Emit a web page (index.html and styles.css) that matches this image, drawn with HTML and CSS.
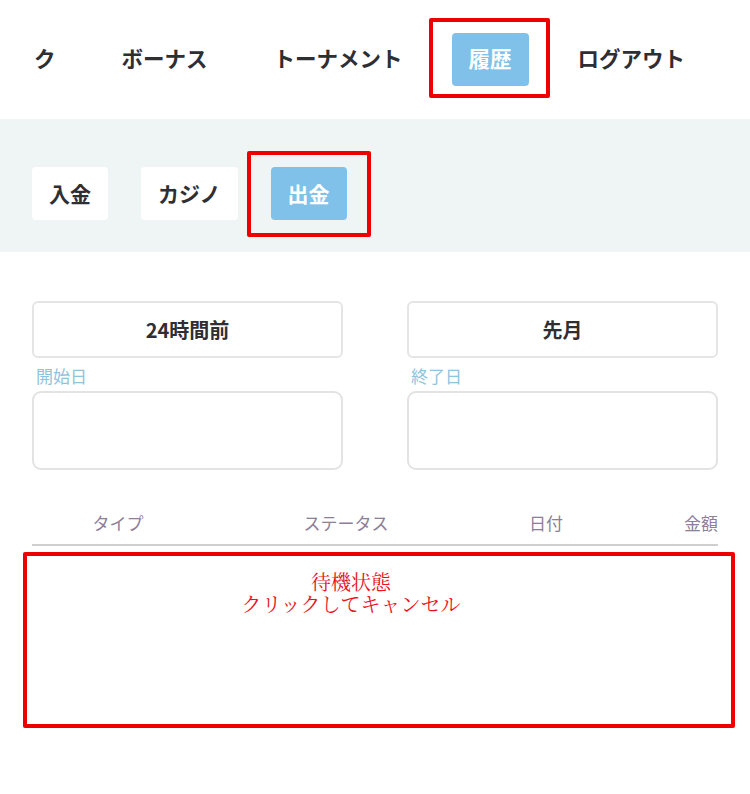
FILE: index.html
```html
<!DOCTYPE html>
<html lang="ja">
<head>
<meta charset="utf-8">
<link rel="stylesheet" href="styles.css">
</head>
<body>
<nav class="topnav">
  <span class="nav-item">ク</span>
  <span class="nav-item">ボーナス</span>
  <span class="nav-item">トーナメント</span>
  <span class="nav-item active mark-nav">履歴</span>
  <span class="nav-item">ログアウト</span>
</nav>
<section class="band">
  <span class="tab">入金</span>
  <span class="tab">カジノ</span>
  <span class="tab active mark-tab">出金</span>
</section>
<section class="filters">
  <div class="col">
    <div class="quick">24時間前</div>
    <label class="lbl">開始日</label>
    <div class="datebox"></div>
  </div>
  <div class="col">
    <div class="quick">先月</div>
    <label class="lbl">終了日</label>
    <div class="datebox"></div>
  </div>
</section>
<div class="thead">
  <span class="th">タイプ</span>
  <span class="th">ステータス</span>
  <span class="th">日付</span>
  <span class="th right">金額</span>
</div>
<div class="rows">
  <div class="pending"><span class="line">待機状態</span><span class="line">クリックしてキャンセル</span></div>
</div>
</body>
</html>
```
FILE: styles.css
```css
* { box-sizing: border-box; }
html, body { margin: 0; padding: 0; background: #fff; }
body {
  width: 750px;
  height: 794px;
  overflow: hidden;
  font-family: "Noto Sans CJK JP", "Noto Sans", sans-serif;
  color: #2e2e33;
}
.topnav {
  display: flex;
  gap: 32px;
  padding: 33px 0 0 17px;
  height: 119px;
  align-items: flex-start;
  white-space: nowrap;
}
.nav-item {
  position: relative;
  display: flex;
  align-items: center;
  height: 53px;
  padding: 0 17px 3px;
  font-size: 21.5px;
  font-weight: 700;
  line-height: 1;
  border-radius: 4px;
}
.nav-item.active, .tab.active {
  background: #80c1ea;
  color: #fff;
}
.mark-nav::after {
  content: "";
  position: absolute;
  left: -23px; right: -21px; top: -15px; bottom: -12px;
  border: 4px solid #ee0000;
  border-radius: 2px;
}
.band {
  background: #eff4f4;
  height: 133px;
  padding: 48px 0 0 32px;
  display: flex;
  align-items: flex-start;
  gap: 33px;
}
.tab {
  position: relative;
  display: flex;
  align-items: center;
  height: 53px;
  padding: 0 17px;
  background: #fff;
  border-radius: 4px;
  font-size: 21px;
  font-weight: 700;
  line-height: 1;
}
.mark-tab::after {
  content: "";
  position: absolute;
  left: -24px; right: -24px; top: -16px; bottom: -17px;
  border: 4px solid #ee0000;
  border-radius: 2px;
}
.filters {
  display: flex;
  gap: 64px;
  padding: 49px 32px 0 32px;
}
.col { width: 311px; display: flex; flex-direction: column; }
.quick {
  height: 57px;
  border: 2px solid #e5e5e5;
  border-radius: 6px;
  display: flex;
  align-items: center;
  justify-content: center;
  font-size: 20px;
  font-weight: 700;
}
.lbl {
  display: block;
  padding: 7px 0 0 4px;
  height: 33px;
  font-size: 17px;
  line-height: 21px;
  color: #8ec4dc;
}
.datebox {
  height: 79px;
  border: 2px solid #e3e3e3;
  border-radius: 9px;
}
.thead {
  margin: 38px 32px 0 32px;
  display: grid;
  grid-template-columns: 172px 284px 116px 1fr;
  height: 38px;
  border-bottom: 2px solid #cfcfcf;
  font-size: 17px;
  line-height: 22px;
  color: #8d7e9a;
  padding-top: 4px;
}
.th { text-align: center; }
.th.right { text-align: right; }
.rows { padding: 6px 15px 0 23px; }
.pending {
  height: 176px;
  border: 4px solid #ee0000;
  border-radius: 2px;
  padding: 15px 56px 0 0;
  display: flex;
  flex-direction: column;
  align-items: center;
  color: #e8141c;
  font-family: "Noto Serif CJK JP", "Liberation Serif", serif;
  font-size: 20px;
  line-height: 22px;
}
.line { display: block; white-space: nowrap; }
```
